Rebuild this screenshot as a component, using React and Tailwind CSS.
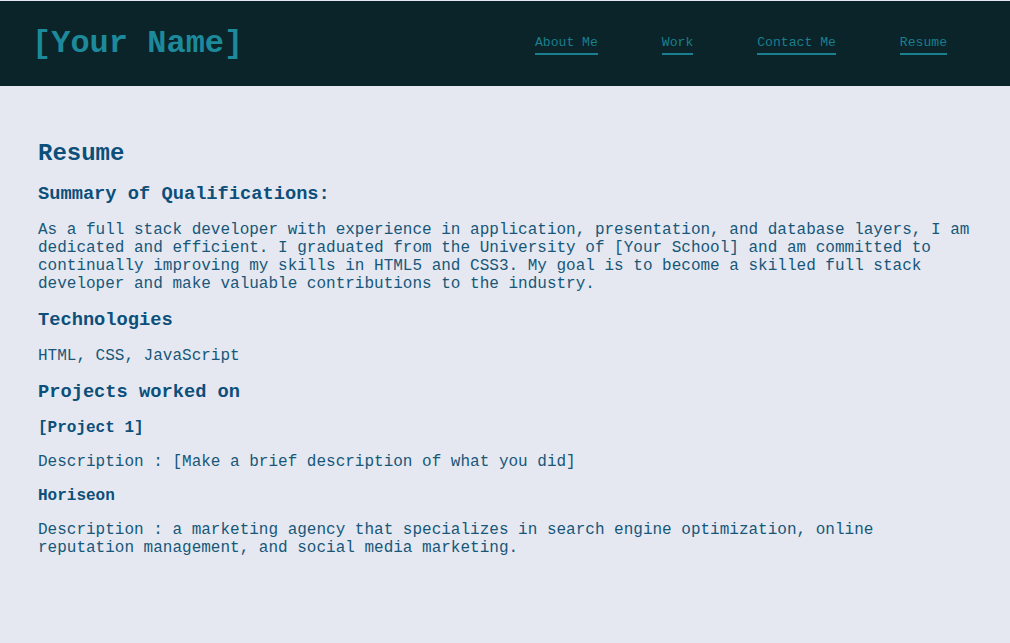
const navLinks = ['About Me', 'Work', 'Contact Me', 'Resume'];

export default function App() {
  return (
    <div
      className="min-h-screen bg-[#e5e8f0] pt-px"
      style={{ fontFamily: '"Liberation Mono", "Courier New", monospace' }}
    >
      {/* Header */}
      <header className="h-[85px] bg-[#0b2429] flex items-center justify-between pl-[32px] pr-[63px]">
        <h1 className="text-[32px] leading-[36px] font-bold text-[#1c8a9b]">[Your Name]</h1>
        <nav className="flex items-center gap-16 pt-[3px]">
          {navLinks.map((link) => (
            <a
              key={link}
              href="#"
              className="text-[13.1px] leading-[15px] text-[#1a7f8e] border-b-2 border-[#1a7f8e] pb-[3px]"
            >
              {link}
            </a>
          ))}
        </nav>
      </header>

      {/* Resume content */}
      <main className="px-[38px] pt-[54px] pb-10 flex flex-col gap-4 text-[#17577a] leading-[normal]">
        <h2 className="text-[24px] font-bold text-[#0b4f7a]">Resume</h2>
        <h3 className="text-[18.72px] font-bold text-[#0b4f7a]">Summary of Qualifications:</h3>
        <p className="text-base leading-[normal]">
          As a full stack developer with experience in application, presentation, and database layers, I am
          dedicated and efficient. I graduated from the University of [Your School] and am committed to
          continually improving my skills in HTML5 and CSS3. My goal is to become a skilled full stack
          developer and make valuable contributions to the industry.
        </p>
        <h3 className="text-[18.72px] font-bold text-[#0b4f7a]">Technologies</h3>
        <p className="text-base leading-[normal]">HTML, CSS, JavaScript</p>
        <h3 className="text-[18.72px] font-bold text-[#0b4f7a]">Projects worked on</h3>
        <h4 className="text-base leading-[normal] font-bold text-[#0b4f7a]">[Project 1]</h4>
        <p className="text-base leading-[normal]">Description : [Make a brief description of what you did]</p>
        <h4 className="text-base leading-[normal] font-bold text-[#0b4f7a]">Horiseon</h4>
        <p className="text-base leading-[normal]">
          Description : a marketing agency that specializes in search engine optimization, online
          reputation management, and social media marketing.
        </p>
      </main>
    </div>
  );
}
